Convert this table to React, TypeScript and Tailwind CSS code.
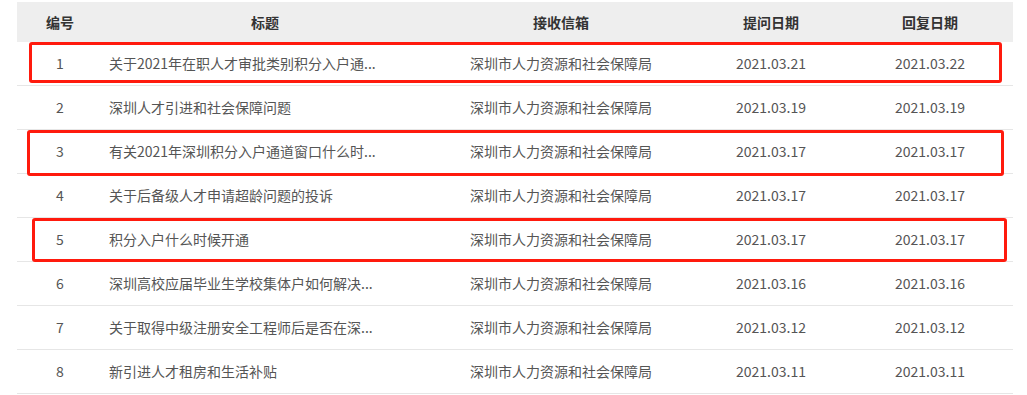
const rows = [
  { no: 1, title: '关于2021年在职人才审批类别积分入户通...', box: '深圳市人力资源和社会保障局', ask: '2021.03.21', reply: '2021.03.22' },
  { no: 2, title: '深圳人才引进和社会保障问题', box: '深圳市人力资源和社会保障局', ask: '2021.03.19', reply: '2021.03.19' },
  { no: 3, title: '有关2021年深圳积分入户通道窗口什么时...', box: '深圳市人力资源和社会保障局', ask: '2021.03.17', reply: '2021.03.17' },
  { no: 4, title: '关于后备级人才申请超龄问题的投诉', box: '深圳市人力资源和社会保障局', ask: '2021.03.17', reply: '2021.03.17' },
  { no: 5, title: '积分入户什么时候开通', box: '深圳市人力资源和社会保障局', ask: '2021.03.17', reply: '2021.03.17' },
  { no: 6, title: '深圳高校应届毕业生学校集体户如何解决...', box: '深圳市人力资源和社会保障局', ask: '2021.03.16', reply: '2021.03.16' },
  { no: 7, title: '关于取得中级注册安全工程师后是否在深...', box: '深圳市人力资源和社会保障局', ask: '2021.03.12', reply: '2021.03.12' },
  { no: 8, title: '新引进人才租房和生活补贴', box: '深圳市人力资源和社会保障局', ask: '2021.03.11', reply: '2021.03.11' },
];

const cols = 'grid grid-cols-[86px_324px_268px_152px_166px]';

export default function App() {
  return (
    <div
      className="relative w-[1027px] h-[395px] bg-white overflow-hidden text-[14px]"
      style={{ fontFamily: '"Microsoft YaHei", "Noto Sans CJK SC", "Noto Sans", sans-serif' }}
    >
      <div className="ml-[17px] mt-[2px] w-[996px]">
        <div className={`${cols} h-[40px] items-center bg-[#eeeeee] font-bold text-[#333]`}>
          <div className="text-center">编号</div>
          <div className="text-center">标题</div>
          <div className="text-center">接收信箱</div>
          <div className="text-center">提问日期</div>
          <div className="text-center">回复日期</div>
        </div>
        {rows.map(r => (
          <div key={r.no} className={`${cols} h-[44px] items-center border-b border-[#e6e6e6] text-[#555]`}>
            <div className="text-center">{r.no}</div>
            <div className="pl-[6px] whitespace-nowrap">{r.title}</div>
            <div className="text-center">{r.box}</div>
            <div className="text-center">{r.ask}</div>
            <div className="text-center">{r.reply}</div>
          </div>
        ))}
      </div>

      {/* red highlight boxes drawn on top of the table */}
      <div className="absolute left-[29px] top-[42px] w-[973px] h-[41px] border-[3px] border-[#ff1a0d] rounded-[3px]" />
      <div className="absolute left-[27px] top-[130px] w-[977px] h-[46px] border-[3px] border-[#ff1a0d] rounded-[3px]" />
      <div className="absolute left-[32px] top-[218px] w-[975px] h-[44px] border-[3px] border-[#ff1a0d] rounded-[3px]" />
    </div>
  );
}
